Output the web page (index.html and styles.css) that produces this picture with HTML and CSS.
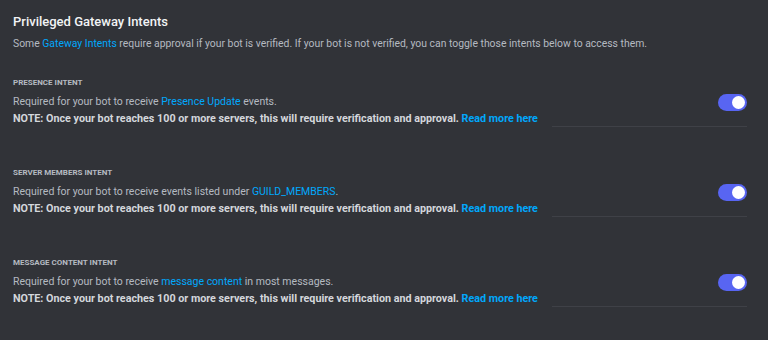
FILE: index.html
```html
<!DOCTYPE html>
<html lang="en">
<head>
    <meta charset="UTF-8">
    <title>Privileged Gateway Intents</title>
    <link rel="stylesheet" href="styles.css">
</head>
<body>
    <div class="page">
        <h2 class="title">Privileged Gateway Intents</h2>
        <p class="intro">Some <a href="#">Gateway Intents</a> require approval if your bot is verified. If your bot is not verified, you can toggle those intents below to access them.</p>

        <div class="intent">
            <div class="intent-text">
                <h3>Presence Intent</h3>
                <p class="desc">Required for your bot to receive <a href="#">Presence Update</a> events.</p>
                <p class="note">NOTE: Once your bot reaches 100 or more servers, this will require verification and approval. <a href="#">Read more here</a></p>
            </div>
            <div class="intent-side">
                <span class="toggle on"><span class="knob"></span></span>
            </div>
        </div>

        <div class="intent">
            <div class="intent-text">
                <h3>Server Members Intent</h3>
                <p class="desc">Required for your bot to receive events listed under <a href="#">GUILD_MEMBERS</a>.</p>
                <p class="note">NOTE: Once your bot reaches 100 or more servers, this will require verification and approval. <a href="#">Read more here</a></p>
            </div>
            <div class="intent-side">
                <span class="toggle on"><span class="knob"></span></span>
            </div>
        </div>

        <div class="intent">
            <div class="intent-text">
                <h3>Message Content Intent</h3>
                <p class="desc">Required for your bot to receive <a href="#">message content</a> in most messages.</p>
                <p class="note">NOTE: Once your bot reaches 100 or more servers, this will require verification and approval. <a href="#">Read more here</a></p>
            </div>
            <div class="intent-side">
                <span class="toggle on"><span class="knob"></span></span>
            </div>
        </div>
    </div>
</body>
</html>
```

FILE: styles.css
```css
body {
    margin: 0;
    background-color: #313338;
    font-family: Roboto, "Noto Sans", sans-serif;
    color: #b5bac1;
}
.page {
    width: 734px;
    padding: 12px 21px 0 13px;
}
a {
    color: #00a8fc;
    text-decoration: none;
}
.title {
    margin: 0;
    font-size: 13px;
    line-height: 19px;
    font-weight: 500;
    color: #f2f3f5;
}
.intro {
    margin: 5px 0 0;
    font-size: 10.4px;
    line-height: 16px;
    white-space: nowrap;
}
.intent {
    display: flex;
    margin-top: 25px;
}
.intent + .intent {
    margin-top: 40px;
}
.intent-text h3 {
    margin: 0;
    font-size: 8px;
    line-height: 12px;
    font-weight: 700;
    text-transform: uppercase;
    color: #b5bac1;
}
.desc {
    margin: 5px 0 0;
    font-size: 10.5px;
    line-height: 16px;
    white-space: nowrap;
}
.note {
    margin: 1px 0 0;
    font-size: 10.75px;
    line-height: 16px;
    font-weight: 700;
    color: #d4d7dc;
    white-space: nowrap;
}
.intent-side {
    flex: 1;
    display: flex;
    flex-direction: column;
    align-items: flex-end;
    margin-left: 14px;
    border-bottom: 1px solid #3f4147;
}
.toggle {
    position: relative;
    width: 29px;
    height: 17px;
    margin-top: 17px;
    border-radius: 9px;
    background-color: #4e5058;
}
.toggle.on {
    background-color: #5865f2;
}
.knob {
    position: absolute;
    top: 2px;
    left: 2px;
    width: 13px;
    height: 13px;
    border-radius: 50%;
    background-color: #fff;
}
.toggle.on .knob {
    left: 14px;
}
```
